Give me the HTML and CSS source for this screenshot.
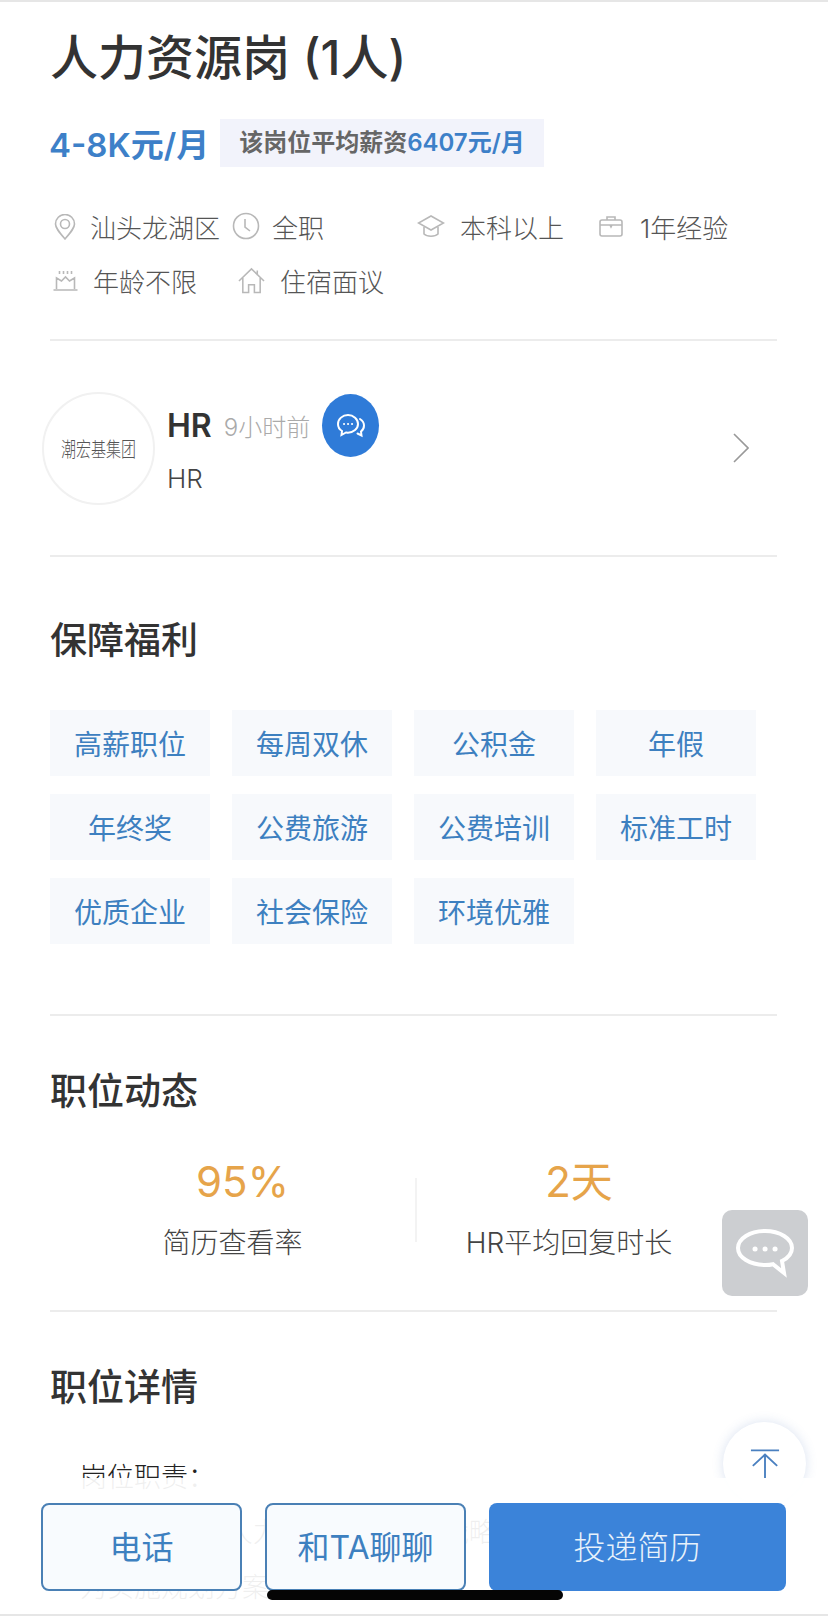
FILE: index.html
```html
<!DOCTYPE html>
<html lang="zh-CN">
<head>
    <meta charset="UTF-8">
    <meta name="viewport" content="width=device-width, initial-scale=1.0">
    <title>人力资源岗</title>
    <link rel="stylesheet" href="styles.css">
</head>
<body>
    <div class="page">
        <div class="content">
            <h1 class="job-title">人力资源岗 (1人)</h1>

            <div class="salary-row">
                <span class="salary">4-8K元/月</span>
                <span class="salary-tag">该岗位平均薪资<em>6407元/月</em></span>
            </div>

            <div class="info-row">
                <div class="info-item w-area">
                    <svg class="icon pin" viewBox="0 0 22 26"><path d="M11 25C5 18 1.500 14 1.500 10a9.500 9.500 0 0 1 19 0c0 4-3.500 8-9.500 15z"/><circle cx="11" cy="10" r="4.500"/></svg>
                    <span>汕头龙湖区</span>
                </div>
                <div class="info-item w-type">
                    <svg class="icon clock" viewBox="0 0 28 28"><circle cx="14" cy="14" r="12.500"/><path d="M13 7v8l5 4"/></svg>
                    <span>全职</span>
                </div>
                <div class="info-item w-edu">
                    <svg class="icon cap" viewBox="0 0 28 24"><path d="M14 2L1.500 9 14 16l12.500-7z"/><path d="M7 13v7c3 3 11 3 14 0v-7"/></svg>
                    <span>本科以上</span>
                </div>
                <div class="info-item">
                    <svg class="icon case" viewBox="0 0 24 22"><rect x="1" y="5" width="22" height="16" rx="2"/><path d="M8 5V2h8v3M1 10h22M11 10l1 2 1-2"/></svg>
                    <span>1年经验</span>
                </div>
            </div>
            <div class="info-row">
                <div class="info-item w-age">
                    <svg class="icon cake" viewBox="0 0 24 22"><path d="M3 20V9l5 3 4-4 4 4 5-3v11M0 21h24M6 2v3M10 2v3M14 2v3M18 2v3"/></svg>
                    <span>年龄不限</span>
                </div>
                <div class="info-item">
                    <svg class="icon house" viewBox="0 0 28 27"><path d="M1 14L14 1.500 27 14M5 11v15h6v-8h6v8h6V11M20 3v5"/></svg>
                    <span>住宿面议</span>
                </div>
            </div>

            <div class="divider first"></div>

            <div class="hr-row">
                <div class="avatar"><span>潮宏基集团</span></div>
                <div class="hr-text">
                    <div class="hr-name-row">
                        <span class="hr-name">HR</span>
                        <span class="hr-time">9小时前</span>
                        <span class="hr-chat">
                            <svg viewBox="0 0 30 26"><path d="M12 2C6.500 2 2 6 2 11c0 3 1.500 5.500 4 7l-.5 4 4.500-2.500c.7.100 1.300.200 2 .200 5.500 0 10-4 10-8.700S17.500 2 12 2z"/><path d="M24 6c2.500 1.500 4 4 4 6.500 0 2.500-1 4.500-3 6l.5 4-4-2"/><path class="dots" d="M8 11h.1M12 11h.1M16 11h.1"/></svg>
                        </span>
                    </div>
                    <div class="hr-role">HR</div>
                </div>
                <svg class="chevron" viewBox="0 0 16 30"><path d="M1 1l14 14L1 29"/></svg>
            </div>

            <div class="divider"></div>

            <h2 class="section-title welfare-title">保障福利</h2>
            <div class="tag-grid">
                <div class="tag">高薪职位</div>
                <div class="tag">每周双休</div>
                <div class="tag">公积金</div>
                <div class="tag">年假</div>
                <div class="tag">年终奖</div>
                <div class="tag">公费旅游</div>
                <div class="tag">公费培训</div>
                <div class="tag">标准工时</div>
                <div class="tag">优质企业</div>
                <div class="tag">社会保险</div>
                <div class="tag">环境优雅</div>
            </div>

            <div class="divider welfare-end"></div>

            <h2 class="section-title status-title">职位动态</h2>
            <div class="stats">
                <div class="stat stat-left">
                    <div class="stat-value">95%</div>
                    <div class="stat-label">简历查看率</div>
                </div>
                <div class="stat-line"></div>
                <div class="stat stat-right">
                    <div class="stat-value">2天</div>
                    <div class="stat-label">HR平均回复时长</div>
                </div>
            </div>

            <div class="divider stats-end"></div>

            <h2 class="section-title detail-title">职位详情</h2>
            <div class="detail">
                <p>岗位职责：</p>
                <p>1、负责公司人力资源规划制定战略</p>
                <p>为实施规划方案提供设计与实施</p>
            </div>
        </div>

        <div class="float-chat">
            <svg viewBox="0 0 60 50"><path d="M30 3C15 3 3 10.500 3 20c0 9.500 12 17 27 17 3 0 6-.3 8-.8L49 45l-2-12c6-3 10-8 10-13C57 10.500 45 3 30 3z"/><path class="dots" d="M20 21h.1M30 21h.1M40 21h.1"/></svg>
        </div>
        <div class="float-top">
            <svg viewBox="0 0 32 32"><path d="M1 1.500h30M16 31V6M3 18L16 6l13 12"/></svg>
        </div>

        <div class="action-bar">
            <button class="btn btn-phone">电话</button>
            <button class="btn btn-talk">和TA聊聊</button>
            <button class="btn btn-send">投递简历</button>
        </div>
        <div class="home-bar"></div>
    </div>
</body>
</html>
```

FILE: styles.css
```css
* {
    margin: 0;
    padding: 0;
    box-sizing: border-box;
}

body {
    background-color: white;
    font-family: Inter, "Noto Sans CJK SC", sans-serif;
    color: #333;
}

.page {
    position: relative;
    width: 828px;
    height: 1616px;
    overflow: hidden;
    border-top: 2px solid #e6e6e6;
    border-bottom: 2px solid #e6e6e6;
}

.content {
    padding: 26px 51px 0 50px;
}

.job-title {
    font-size: 48px;
    line-height: 60px;
    font-weight: 500;
    color: #333;
}

.salary-row {
    display: flex;
    align-items: center;
    gap: 11px;
    margin-top: 31px;
}

.salary {
    margin-left: -1px;
    font-size: 33px;
    font-weight: 600;
    color: #3d80c8;
}

.salary-tag {
    display: block;
    height: 48px;
    line-height: 48px;
    padding: 0 19px;
    background-color: #f2f3fb;
    font-size: 24px;
    font-weight: 600;
    color: #666;
}

.salary-tag em {
    font-style: normal;
    color: #3d80c8;
}

.info-row {
    display: flex;
    height: 54px;
    align-items: center;
    font-size: 26px;
    font-weight: 300;
    color: #555;
}

.salary-row + .info-row {
    margin-top: 32px;
}

.info-item {
    display: flex;
    align-items: center;
}

.w-area { width: 182px; }
.w-type { width: 185px; }
.w-edu { width: 182px; }
.w-age { width: 188px; }

.icon {
    flex: none;
    fill: none;
    stroke: #b8b8b8;
    stroke-width: 1.6;
}

.pin { width: 22px; height: 26px; margin: 2px 14px 0 4px; }
.clock { width: 28px; height: 28px; margin-right: 12px; }
.cap { width: 28px; height: 24px; margin-right: 15px; }
.case { width: 24px; height: 22px; margin-right: 17px; }
.cake { width: 25px; height: 22px; margin: 0 15px 0 3px; }
.house { width: 27px; height: 27px; margin-right: 15px; }

.divider {
    height: 2px;
    background-color: #ececec;
}

.divider.first {
    margin-top: 32px;
}

.hr-row {
    display: flex;
    height: 214px;
    padding-top: 51px;
    align-items: flex-start;
}

.avatar {
    flex: none;
    display: flex;
    align-items: center;
    justify-content: center;
    width: 113px;
    height: 113px;
    margin-left: -8px;
    border: 2px solid #f1f1f1;
    border-radius: 50%;
    font-size: 15px;
    font-weight: 300;
    color: #555;
}

.avatar span {
    transform: scaleY(1.35);
    white-space: nowrap;
}

.hr-text {
    margin-left: 12px;
}

.hr-name-row {
    display: flex;
    align-items: center;
    height: 63px;
    margin-top: 2px;
    gap: 12px;
}

.hr-name {
    font-size: 32px;
    font-weight: 600;
    color: #333;
}

.hr-time {
    font-size: 24px;
    font-weight: 300;
    color: #aaa;
}

.hr-chat {
    display: flex;
    align-items: center;
    justify-content: center;
    width: 57px;
    height: 63px;
    border-radius: 50%;
    background-color: #2f7bd8;
}

.hr-chat svg {
    width: 30px;
    height: 26px;
    fill: none;
    stroke: white;
    stroke-width: 2;
    stroke-linecap: round;
}

.hr-role {
    margin-top: 7px;
    font-size: 26px;
    line-height: 30px;
    font-weight: 300;
    color: #444;
}

.chevron {
    width: 16px;
    height: 30px;
    margin: 41px 28px 0 auto;
    fill: none;
    stroke: #999;
    stroke-width: 1.6;
}

.section-title {
    font-size: 37px;
    line-height: 44px;
    font-weight: 500;
    color: #333;
}

.welfare-title {
    margin-top: 62px;
}

.tag-grid {
    display: grid;
    grid-template-columns: repeat(4, 160px);
    grid-auto-rows: 66px;
    gap: 18px 22px;
    margin-top: 47px;
}

.tag {
    display: flex;
    align-items: center;
    justify-content: center;
    background-color: #f7f9fc;
    font-size: 28px;
    color: #3d80c0;
}

.divider.welfare-end {
    margin-top: 70px;
}

.status-title {
    margin-top: 54px;
}

.stats {
    display: flex;
    align-items: center;
    margin-top: 42px;
}

.stat {
    text-align: center;
}

.stat-left { width: 365px; }
.stat-right { width: 304px; }

.stat-value {
    padding-left: 20px;
    font-size: 42px;
    line-height: 52px;
    color: #e6a44a;
}

.stat-label {
    margin-top: 15px;
    font-size: 28px;
    line-height: 40px;
    font-weight: 300;
    color: #444;
}

.stat-line {
    flex: none;
    width: 2px;
    height: 64px;
    background-color: #f3f3f3;
}

.divider.stats-end {
    margin-top: 47px;
}

.detail-title {
    margin-top: 54px;
}

.detail {
    margin-top: 40px;
    padding-left: 30px;
    font-size: 27px;
    line-height: 55px;
    font-weight: 300;
    color: #222;
    white-space: nowrap;
}

.float-chat {
    position: absolute;
    left: 722px;
    top: 1208px;
    display: flex;
    align-items: center;
    justify-content: center;
    width: 86px;
    height: 86px;
    border-radius: 10px;
    background-color: #ccced1;
}

.float-chat svg {
    width: 60px;
    height: 50px;
    fill: none;
    stroke: white;
    stroke-width: 4;
    stroke-linecap: round;
}

.float-chat .dots {
    stroke-width: 5;
}

.float-top {
    position: absolute;
    left: 723px;
    top: 1420px;
    display: flex;
    justify-content: center;
    align-items: flex-start;
    width: 83px;
    height: 83px;
    padding-top: 27px;
    border-radius: 50%;
    background-color: white;
    box-shadow: 0 0 12px rgba(70, 110, 180, 0.2);
}

.float-top svg {
    width: 32px;
    height: 30px;
    fill: none;
    stroke: #4a80c0;
    stroke-width: 2;
}

.action-bar {
    position: absolute;
    left: 0;
    right: 0;
    top: 1476px;
    bottom: 0;
    display: flex;
    align-items: flex-start;
    gap: 23px;
    padding: 25px 0 0 41px;
    background-color: rgba(255, 255, 255, 0.93);
}

.btn {
    height: 88px;
    padding-bottom: 4px;
    border-radius: 8px;
    font-family: inherit;
    font-size: 32px;
    color: #3d80c0;
    background-color: #f8fbfe;
    border: 2px solid #4a80b5;
}

.btn-phone { width: 201px; }
.btn-talk { width: 201px; }

.btn-send {
    width: 297px;
    border: none;
    background-color: #3b83d9;
    color: #e8f2fb;
    font-weight: 300;
}

.home-bar {
    position: absolute;
    left: 267px;
    top: 1588px;
    width: 296px;
    height: 10px;
    border-radius: 5px;
    background-color: #050505;
}
```
